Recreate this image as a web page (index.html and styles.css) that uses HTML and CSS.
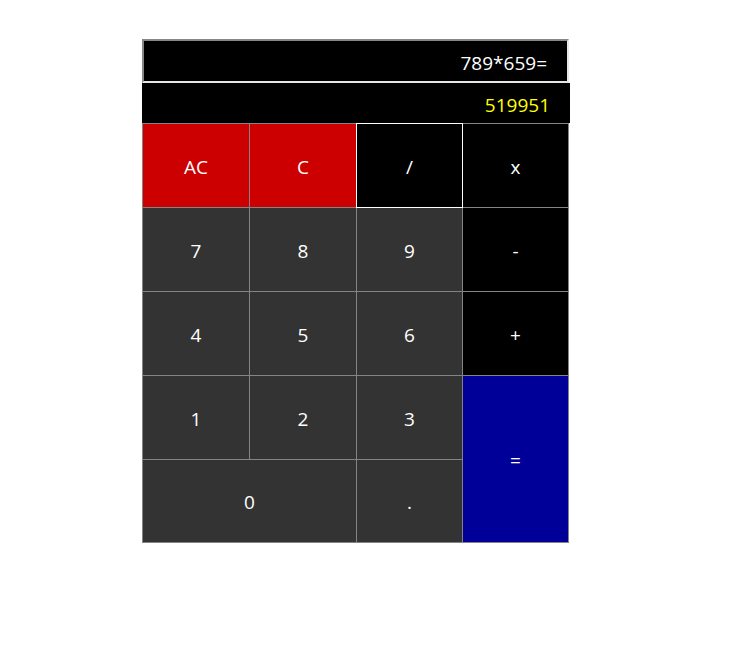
FILE: index.html
```html
<!DOCTYPE html>
<html>
<head>
<meta charset="utf-8">
<link rel="stylesheet" href="styles.css">
</head>
<body>
<div class="calc">
  <div class="display expr">789*659=</div>
  <div class="display result">519951</div>
  <div class="keys">
    <div class="key red">AC</div>
    <div class="key red">C</div>
    <div class="key op focus">/</div>
    <div class="key op">x</div>
    <div class="key num">7</div>
    <div class="key num">8</div>
    <div class="key num">9</div>
    <div class="key op">-</div>
    <div class="key num">4</div>
    <div class="key num">5</div>
    <div class="key num">6</div>
    <div class="key op">+</div>
    <div class="key num">1</div>
    <div class="key num">2</div>
    <div class="key num">3</div>
    <div class="key eq">=</div>
    <div class="key num zero">0</div>
    <div class="key num">.</div>
  </div>
</div>
</body>
</html>
```
FILE: styles.css
```css
html, body {
  margin: 0;
  padding: 0;
  background: #ffffff;
}
body {
  font-family: "Open Sans", "Noto Sans", sans-serif;
  font-size: 19px;
}
.calc {
  margin: 39px 0 0 142px;
  width: 428px;
  display: flex;
  flex-direction: column;
}
.display {
  background: #000;
  box-sizing: border-box;
  display: flex;
  align-items: center;
  justify-content: flex-end;
  padding-right: 20px;
}
.expr {
  width: 427px;
  height: 44px;
  color: #fff;
  border-style: solid;
  border-width: 2px;
  border-color: #878787 #e6e6e6 #e6e6e6 #878787;
  padding-top: 3px;
}
.result {
  width: 428px;
  height: 40px;
  color: #ffff00;
  padding-top: 3px;
}
.keys {
  width: 427px;
  box-sizing: border-box;
  display: grid;
  grid-template-columns: 106px 106px 105px 105px;
  grid-template-rows: 83px 83px 83px 83px 82px;
  gap: 1px;
  padding: 1px;
  background: #848484;
}
.key {
  display: flex;
  align-items: center;
  justify-content: center;
  color: #fff;
  padding-top: 2px;
  box-sizing: border-box;
}
.red { background: #cc0000; }
.op { background: #000; }
.num { background: #333333; }
.eq {
  background: #000099;
  grid-row: span 2;
}
.zero { grid-column: span 2; }
.focus {
  outline: 1px solid #ffffff;
}
```
